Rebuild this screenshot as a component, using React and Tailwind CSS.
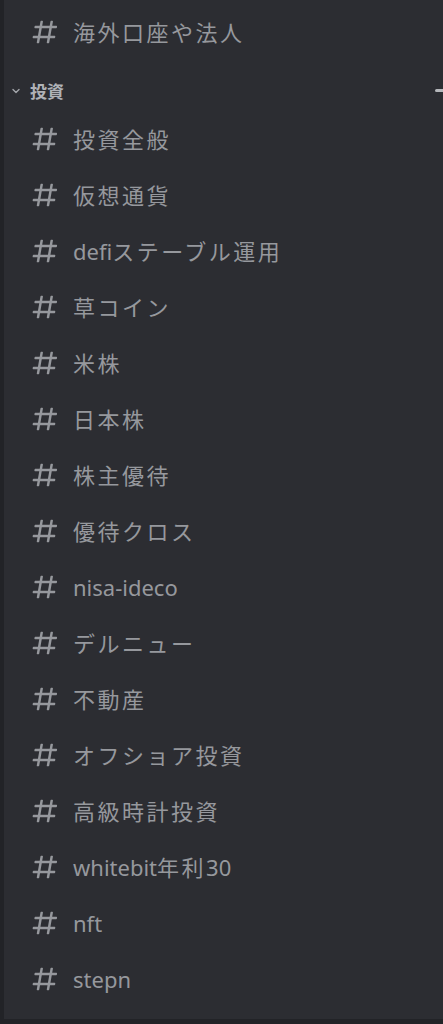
import React from "react";

const channels = [
  "投資全般",
  "仮想通貨",
  "defiステーブル運用",
  "草コイン",
  "米株",
  "日本株",
  "株主優待",
  "優待クロス",
  "nisa-ideco",
  "デルニュー",
  "不動産",
  "オフショア投資",
  "高級時計投資",
  "whitebit年利30",
  "nft",
  "stepn",
];

// split text into latin / cjk runs so the cjk ones get a bit of tracking
function splitRuns(text) {
  return text.match(/[\u3000-\u9fff\uff00-\uffef]+|[^\u3000-\u9fff\uff00-\uffef]+/g) || [];
}

function HashIcon() {
  return (
    <svg width="30" height="30" viewBox="0 0 24 24" className="shrink-0 text-[#96989d]">
      <path
        fill="currentColor"
        fillRule="evenodd"
        d="M5.88657 21C5.57547 21 5.3399 20.7189 5.39427 20.4126L6.00001 17H2.59511C2.28449 17 2.04905 16.7198 2.10259 16.4138L2.27759 15.4138C2.31946 15.1746 2.52722 15 2.77011 15H6.35001L7.41001 9H4.00511C3.69449 9 3.45905 8.71977 3.51259 8.41381L3.68759 7.41381C3.72946 7.17456 3.93722 7 4.18011 7H7.76001L8.39677 3.41262C8.43914 3.17391 8.64664 3 8.88907 3H9.87344C10.1845 3 10.4201 3.28107 10.3657 3.58738L9.76001 7H15.76L16.3968 3.41262C16.4391 3.17391 16.6466 3 16.8891 3H17.8734C18.1845 3 18.4201 3.28107 18.3657 3.58738L17.76 7H21.1649C21.4755 7 21.711 7.28023 21.6574 7.58619L21.4824 8.58619C21.4406 8.82544 21.2328 9 20.9899 9H17.41L16.35 15H19.7549C20.0655 15 20.301 15.2802 20.2474 15.5862L20.0724 16.5862C20.0306 16.8254 19.8228 17 19.5799 17H16L15.3632 20.5874C15.3209 20.8261 15.1134 21 14.8709 21H13.8866C13.5755 21 13.3399 20.7189 13.3943 20.4126L14 17H8.00001L7.36325 20.5874C7.32088 20.8261 7.11337 21 6.87094 21H5.88657ZM9.41045 9L8.35045 15H14.3504L15.4104 9H9.41045Z"
      />
    </svg>
  );
}

function ChannelRow({ name }) {
  return (
    <div className="flex h-[56px] items-center pl-[26px]">
      <HashIcon />
      <span className="ml-[13px] whitespace-nowrap text-[22px] leading-none text-[#96989d]">
        {splitRuns(name).map((run, i) =>
          /[\u3000-\u9fff\uff00-\uffef]/.test(run) ? (
            <span key={i} className="tracking-[2.5px]">{run}</span>
          ) : (
            <span key={i}>{run}</span>
          )
        )}
      </span>
    </div>
  );
}

export default function App() {
  return (
    <div
      className="flex h-[1024px] w-full flex-col bg-[#222327]"
      style={{ fontFamily: '"Noto Sans", "Noto Sans CJK JP", sans-serif' }}
    >
      <div className="flex flex-1 overflow-hidden">
        <div className="w-[4px] shrink-0 bg-[#222327]" />
        <div className="relative flex-1 overflow-hidden bg-[#2c2d32] pt-[4px]">
          <ChannelRow name="海外口座や法人" />

          {/* category header */}
          <div className="relative mt-[19px] mb-[8px] flex h-[24px] items-center pl-[7px]">
            <svg width="10" height="10" viewBox="0 0 10 10" className="text-[#a3a5aa]">
              <path d="M2 3.5 L5 6.5 L8 3.5" fill="none" stroke="currentColor" strokeWidth="1.4" strokeLinecap="round" strokeLinejoin="round" />
            </svg>
            <span className="ml-[9px] text-[17px] font-bold leading-none text-[#b0b2b7]">投資</span>
            <div className="absolute right-[-12px] top-[10px] h-[3px] w-[20px] rounded-sm bg-[#b5b7bb]" />
          </div>

          {channels.map((c) => (
            <ChannelRow key={c} name={c} />
          ))}
        </div>
      </div>
      <div className="h-[5px] shrink-0 bg-[#222327]" />
    </div>
  );
}
